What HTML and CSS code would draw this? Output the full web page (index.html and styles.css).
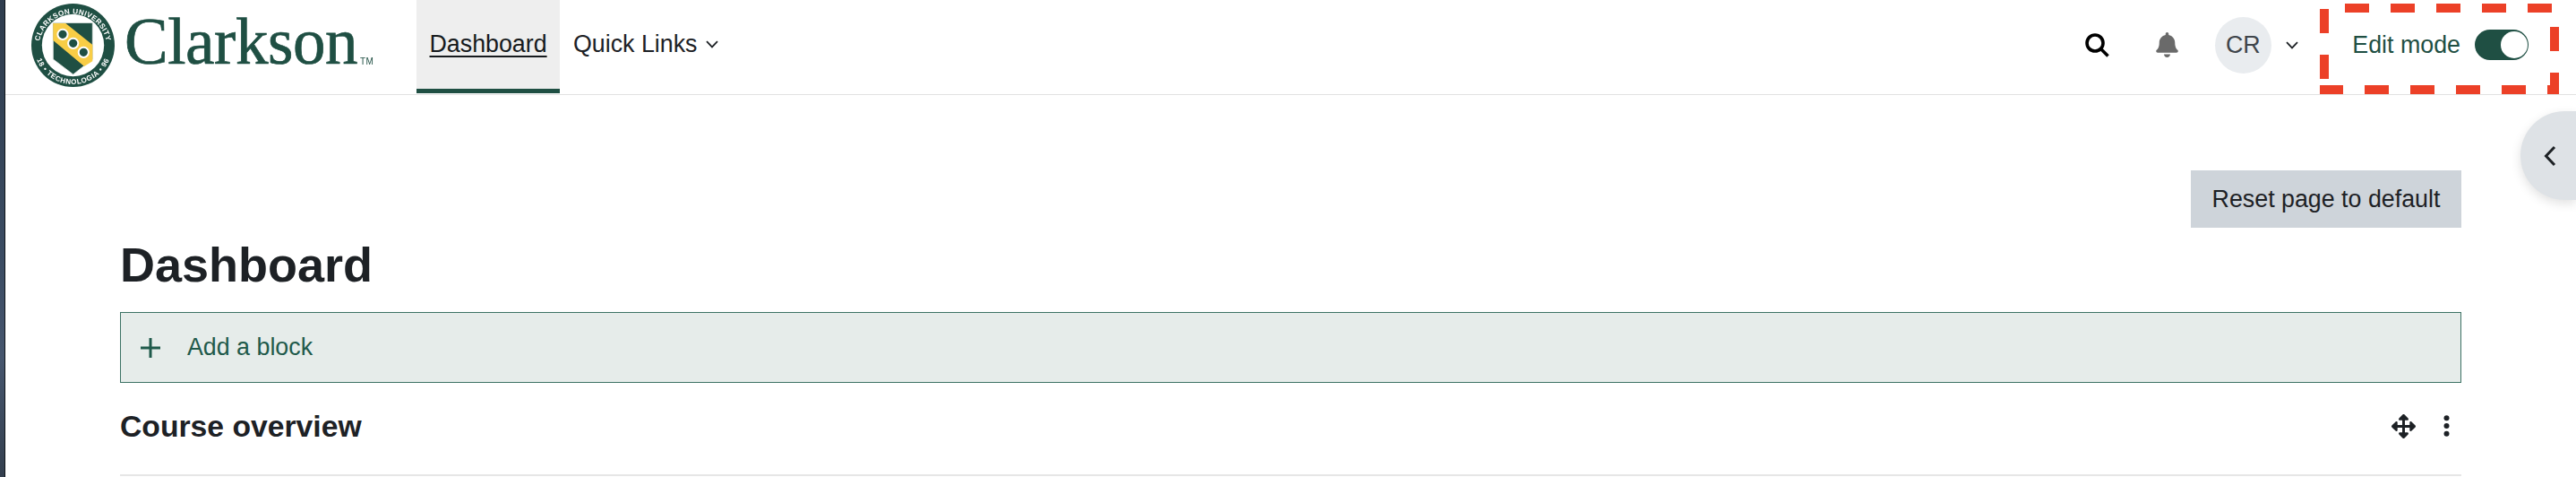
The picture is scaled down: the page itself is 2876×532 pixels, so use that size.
FILE: index.html
```html
<!DOCTYPE html>
<html lang="en">
<head>
<meta charset="utf-8">
<title>Dashboard</title>
<link rel="stylesheet" href="styles.css">
</head>
<body>
<div class="page">
  <div class="desktop-edge"></div>
  <div class="main">
    <header class="navbar">
      <a class="brand">
        <svg class="seal" viewBox="0 0 93 93" aria-hidden="true">
          <defs>
            <path id="arc-top" d="M 9.5 58 A 38 38 0 1 1 83.5 58"/>
            <path id="arc-bottom" d="M 3 46.5 A 43.5 43.5 0 0 0 90 46.5"/>
          </defs>
          <circle class="seal-ring" cx="46.5" cy="46.5" r="46.5"/>
          <circle class="seal-inner" cx="46.5" cy="46.5" r="34.7"/>
          <path class="seal-shield" d="M24.3 21.5H68.3V62L46.7 79L24.3 62Z"/>
          <path class="seal-band" d="M24.3 22H38.3L68.3 46V64.3L59 70L24.3 41Z"/>
          <circle class="seal-hole" cx="35" cy="34.3" r="5.6"/>
          <circle class="seal-hole" cx="46.7" cy="44.3" r="5.6"/>
          <circle class="seal-hole" cx="58.3" cy="54.3" r="5.6"/>
          <text class="seal-text"><textPath href="#arc-top" startOffset="50%">CLARKSON UNIVERSITY</textPath></text>
          <text class="seal-text seal-text-low"><textPath href="#arc-bottom" startOffset="50%">18 • TECHNOLOGIA • 96</textPath></text>
        </svg>
        <span class="wordmark">Clarkson</span>
        <span class="tm">TM</span>
      </a>
      <nav class="primary">
        <a class="tab tab-active"><span class="tab-label">Dashboard</span></a>
        <a class="tab">Quick Links
          <svg class="caret" viewBox="0 0 14 9" aria-hidden="true"><path d="M1 1.2L7 7.4L13 1.2"/></svg>
        </a>
      </nav>
      <div class="actions">
        <svg class="icon-search" viewBox="0 0 27 27" aria-hidden="true"><circle cx="11" cy="11" r="9"/><path d="M17.5 17.5L25.5 25.5"/></svg>
        <svg class="icon-bell" viewBox="0 0 448 512" aria-hidden="true"><path d="M224 512c35.32 0 63.97-28.65 63.97-64H160.03c0 35.35 28.65 64 63.97 64zm215.39-149.71c-19.32-20.76-55.47-51.99-55.47-154.29 0-77.7-54.48-139.9-127.94-155.16V32c0-17.67-14.32-32-31.98-32s-31.98 14.33-31.98 32v20.84C118.56 68.1 64.08 130.3 64.08 208c0 102.3-36.15 133.53-55.47 154.29-6 6.45-8.66 14.16-8.61 21.71.11 16.4 12.98 32 32.1 32h383.8c19.12 0 32-15.6 32.1-32 .05-7.55-2.61-15.27-8.61-21.71z"/></svg>
        <span class="avatar">CR</span>
        <svg class="caret caret-user" viewBox="0 0 14 9" aria-hidden="true"><path d="M1 1.2L7 7.4L13 1.2"/></svg>
        <span class="edit-label">Edit mode</span>
        <span class="toggle"><span class="toggle-knob"></span></span>
      </div>
      <svg class="callout" viewBox="0 0 267 105" aria-hidden="true">
        <path class="callout-dash" d="M28 9H259"/>
        <path class="callout-dash" d="M-1 100H267"/>
        <path class="callout-dash" d="M5 10V88"/>
        <path class="callout-dash" d="M262 30V105"/>
      </svg>
    </header>

    <button class="drawer-toggle" type="button" aria-label="Open drawer">
      <svg viewBox="0 0 14 24" aria-hidden="true"><path d="M12 2L2.5 12L12 22"/></svg>
    </button>

    <main class="content">
      <div class="reset-row"><button class="reset" type="button">Reset page to default</button></div>
      <h1 class="title">Dashboard</h1>
      <div class="add-block">
        <svg class="plus" viewBox="0 0 22 22" aria-hidden="true"><path d="M11 0V22M0 11H22"/></svg>
        <span>Add a block</span>
      </div>
      <section class="block-head">
        <h2 class="block-title">Course overview</h2>
        <div class="block-tools">
          <svg class="icon-move" viewBox="0 0 512 512" aria-hidden="true"><path d="M352.201 425.775l-79.196 79.196c-9.373 9.373-24.568 9.373-33.941 0l-79.196-79.196c-15.119-15.119-4.411-40.971 16.971-40.97h51.162L228 284H127.196v51.162c0 21.382-25.851 32.09-40.971 16.971L7.029 272.937c-9.373-9.373-9.373-24.569 0-33.941L86.225 159.8c15.119-15.119 40.971-4.411 40.971 16.971V228H228V127.196h-51.23c-21.382 0-32.09-25.851-16.971-40.971l79.196-79.196c9.373-9.373 24.568-9.373 33.941 0l79.196 79.196c15.119 15.119 4.411 40.971-16.971 40.971h-51.162V228h100.804v-51.162c0-21.382 25.851-32.09 40.97-16.971l79.196 79.196c9.373 9.373 9.373 24.569 0 33.941L425.773 352.2c-15.119 15.119-40.971 4.411-40.97-16.971V284H284v100.804h51.23c21.382 0 32.09 25.851 16.971 40.971z"/></svg>
          <svg class="icon-dots" viewBox="0 0 7 24" aria-hidden="true"><circle cx="3.5" cy="3.2" r="3"/><circle cx="3.5" cy="12" r="3"/><circle cx="3.5" cy="20.8" r="3"/></svg>
        </div>
      </section>
    </main>
  </div>
</div>
</body>
</html>
```
FILE: styles.css
```css
* { box-sizing: border-box; }
html, body { margin: 0; padding: 0; background: #fff; }
body {
  font-family: "Liberation Sans", Arial, sans-serif;
  font-size: 26.8px;
  color: #1d2125;
}
.page {
  display: flex;
  height: 532px;
  overflow: hidden;
  position: relative;
}
.desktop-edge {
  flex: 0 0 6px;
  background: linear-gradient(180deg, #2f3d4e 0%, #3b4c63 55%, #46566e 75%, #333f4e 100%);
  border-right: 1px solid #10151a;
}
.main { flex: 1; min-width: 0; }

/* Navbar */
.navbar {
  position: relative;
  display: flex;
  align-items: flex-start;
  height: 106px;
  border-bottom: 1px solid #e2e2e2;
}
.brand {
  flex: 0 0 459px;
  display: flex;
  align-items: flex-start;
  padding: 4px 0 0 29px;
  color: #1f4f43;
}
.seal { width: 93px; height: 93px; flex: none; filter: blur(.4px); }
.seal-ring, .seal-shield { fill: #1f4f43; }
.seal-inner { fill: #fff; }
.seal-band { fill: #f8cd46; }
.seal-hole { fill: #1f4f43; stroke: #fff; stroke-width: 2; }
.seal-shield { stroke: #dfe6e3; stroke-width: .8; }
.seal-text {
  fill: #fff;
  font-family: "Liberation Sans", Arial, sans-serif;
  font-weight: 700;
  font-size: 8.2px;
  letter-spacing: .35px;
  text-anchor: middle;
}
.seal-text-low { font-size: 8px; letter-spacing: .6px; }
.wordmark {
  margin: 3px 0 0 11px;
  font-family: "Liberation Serif", "Times New Roman", serif;
  font-size: 73px;
  line-height: 80px;
  letter-spacing: -.45px;
  -webkit-text-stroke: .7px #1f4f43;
  filter: blur(.3px);
}
.tm {
  margin: 60px 0 0 3px;
  font-size: 10px;
  line-height: 10px;
  letter-spacing: .4px;
  filter: blur(.2px);
}
.primary { display: flex; height: 104px; }
.tab {
  display: flex;
  align-items: center;
  gap: 9px;
  padding: 0 15px;
  height: 104px;
  padding-bottom: 5px;
  white-space: nowrap;
}
.tab-active {
  width: 160px;
  background: #eee;
  border-bottom: 5px solid #1f4f43;
  padding-bottom: 0;
  padding-left: 14.5px;
  color: #161a1d;
}
.tab-label { text-decoration: underline; text-underline-offset: 4px; text-decoration-thickness: 2px; }
.caret { width: 14px; height: 9px; flex: none; }
.caret path { fill: none; stroke: #1d2125; stroke-width: 1.8; }

.actions {
  margin-left: auto;
  height: 100px;
  padding-right: 53px;
  display: flex;
  align-items: center;
}
.icon-search { width: 27px; height: 27px; margin-right: 52px; }
.icon-search circle, .icon-search path { fill: none; stroke: #000; stroke-width: 3.6; }
.icon-bell { width: 25px; height: 28px; margin-right: 41px; fill: #6a6a6a; }
.avatar {
  width: 63px;
  height: 63px;
  border-radius: 50%;
  background: #e9ecef;
  color: #3f454b;
  display: flex;
  align-items: center;
  justify-content: center;
  margin-right: 16px;
}
.caret-user { margin-right: 60.5px; }
.edit-label { color: #1f4f43; margin-right: 16px; white-space: nowrap; }
.toggle {
  width: 60px;
  height: 34px;
  border-radius: 17px;
  background: #1f4f43;
  display: flex;
  align-items: center;
  justify-content: flex-end;
  padding-right: 1.5px;
}
.toggle-knob { width: 30px; height: 30px; border-radius: 50%; background: #fff; }

.callout {
  position: absolute;
  left: 2584px;
  top: 0;
  width: 267px;
  height: 105px;
  overflow: hidden;
}
.callout-dash {
  fill: none;
  stroke: #ec4027;
  stroke-width: 10;
  stroke-dasharray: 27 24;
}

.drawer-toggle {
  position: absolute;
  top: 124px;
  right: 0;
  width: 62px;
  height: 99px;
  padding: 0 0 0 26px;
  border: 0;
  border-radius: 50px 0 0 50px;
  background: #dee2e6;
  box-shadow: 0 4px 12px rgba(0, 0, 0, .12);
  display: flex;
  align-items: center;
}
.drawer-toggle svg { width: 14px; height: 24px; }
.drawer-toggle path { fill: none; stroke: #1d2125; stroke-width: 3; }

/* Content */
.content { padding: 84px 128px 0; }
.reset-row { display: flex; justify-content: flex-end; }
.reset {
  height: 64px;
  width: 302px;
  padding: 0;
  border: 0;
  background: #ced4da;
  color: #1d2125;
  font: inherit;
}
.title {
  margin: 9px 0 21px;
  font-size: 54px;
  line-height: 64px;
  font-weight: 700;
}
.add-block {
  height: 79px;
  border: 1.5px solid #3d7264;
  background: #e6ecea;
  color: #1f5a4b;
  display: flex;
  align-items: center;
  padding-left: 22px;
  gap: 30px;
}
.plus { width: 22px; height: 22px; }
.plus path { fill: none; stroke: #1f5a4b; stroke-width: 3; }
.block-head {
  margin-top: 28px;
  padding-bottom: 34px;
  border-bottom: 2px solid #e6e6e6;
  display: flex;
  align-items: center;
  justify-content: space-between;
}
.block-title {
  margin: 0;
  font-size: 33.7px;
  line-height: 40px;
  font-weight: 700;
}
.block-tools { display: flex; align-items: center; gap: 31px; padding-right: 13px; }
.icon-move { width: 27px; height: 27px; fill: #1d2125; }
.icon-dots { width: 7px; height: 24px; fill: #1d2125; }
```
